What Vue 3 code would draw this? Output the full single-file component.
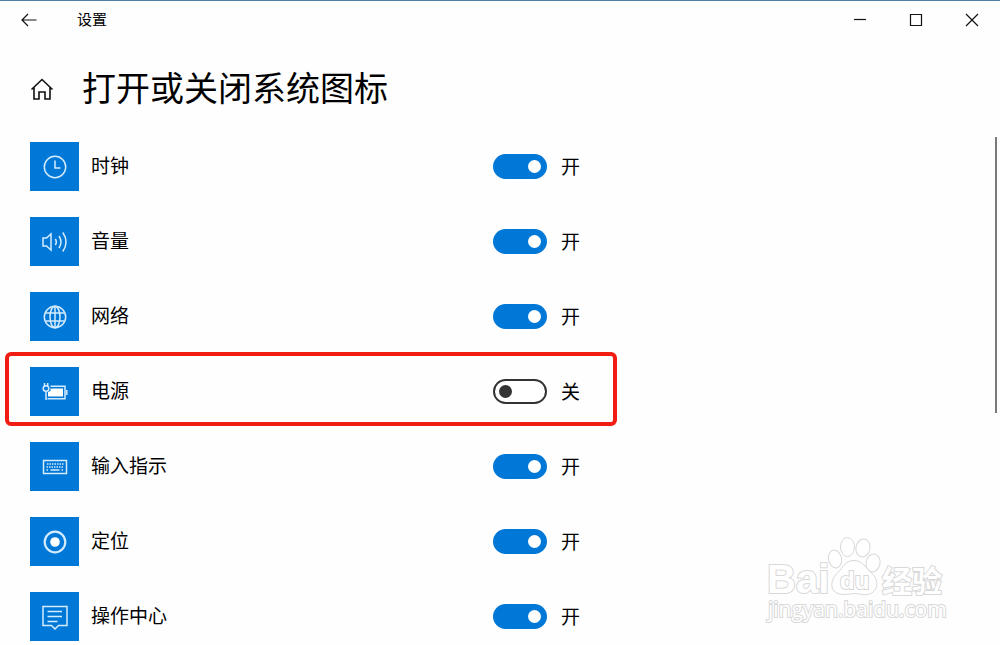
<script setup>
import { reactive } from 'vue'

const items = reactive([
  { id: 'clock', name: '时钟', on: true },
  { id: 'volume', name: '音量', on: true },
  { id: 'network', name: '网络', on: true },
  { id: 'power', name: '电源', on: false, marked: true },
  { id: 'input', name: '输入指示', on: true },
  { id: 'location', name: '定位', on: true },
  { id: 'action', name: '操作中心', on: true }
])
</script>

<template>
  <div class="window">
    <header class="titlebar">
      <button class="back" type="button" aria-label="返回">
        <svg width="16" height="14" viewBox="0 0 16 14"><path d="M15.500 7H1M7 1L1 7l6 6" /></svg>
      </button>
      <span class="app-name">设置</span>
      <div class="controls">
        <button type="button" aria-label="最小化">
          <svg width="14" height="14" viewBox="0 0 14 14"><path d="M1 6.500h12" /></svg>
        </button>
        <button type="button" aria-label="最大化">
          <svg width="14" height="14" viewBox="0 0 14 14"><path d="M1.500 1.500h11v11h-11z" /></svg>
        </button>
        <button type="button" aria-label="关闭">
          <svg width="14" height="14" viewBox="0 0 14 14"><path d="M1 1l12 12M13 1l-12 12" /></svg>
        </button>
      </div>
    </header>

    <div class="heading">
      <button class="home" type="button" aria-label="主页">
        <svg width="24" height="24" viewBox="0 0 24 24">
          <path d="M1.500 12.500L12 2.500l10.500 10M4 10.500v11.500h5v-7h6v7h5V10.500" />
        </svg>
      </button>
      <h1>打开或关闭系统图标</h1>
    </div>

    <div class="body">
      <main class="list">
        <div v-for="item in items" :key="item.id" class="row" :class="{ marked: item.marked }">
          <span class="tile">
            <svg width="26" height="26" viewBox="0 0 26 26" aria-hidden="true">
              <g v-if="item.id === 'clock'">
                <circle cx="13" cy="13" r="10.700" />
                <path d="M13 6.500V14h5.500" />
              </g>
              <g v-else-if="item.id === 'volume'">
                <path d="M1 9h3.500l4.500-4v16l-4.500-4H1z" />
                <path d="M13.300 10q2 3 0 6M17 7q4 6 0 12M20.800 3.500q6.500 9.500 0 19" />
              </g>
              <g v-else-if="item.id === 'network'">
                <circle cx="13" cy="13" r="10.700" />
                <ellipse cx="13" cy="13" rx="5" ry="10.700" />
                <path d="M13 2.300v21.400M3.500 9h19M3.500 17h19" />
              </g>
              <g v-else-if="item.id === 'power'">
                <path d="M2.500 4v4M5.700 4v4M4 12v9" />
                <circle cx="4" cy="9.500" r="2.800" />
                <path class="solid" d="M8.500 9.500h12.500v8H6v-4.500l2.500-1z" />
                <path d="M8.500 7.200H23v12.600H5.500M24.800 11v5" />
              </g>
              <g v-else-if="item.id === 'input'">
                <path d="M1.500 6.500h23v13h-23z" />
                <path class="keys" d="M5 10h16.500M4.500 13h17" />
                <path class="keys" d="M4.500 16h2M19.500 16h2" />
                <path d="M8.500 16h9" />
              </g>
              <g v-else-if="item.id === 'location'">
                <circle class="ring" cx="13" cy="13" r="10.300" />
                <circle class="solid" cx="13" cy="13" r="4.800" />
              </g>
              <g v-else>
                <path d="M1 2.500h24v19h-8.500L13 25l-3.500-3.500H1z" />
                <path d="M5.500 7.500h14.500M5.500 12.500h14.500M5.500 17.500h10" />
              </g>
            </svg>
          </span>
          <label class="name" :for="item.id">{{ item.name }}</label>
          <input :id="item.id" v-model="item.on" class="toggle" type="checkbox" role="switch" />
          <span class="state">{{ item.on ? '开' : '关' }}</span>
        </div>
      </main>
      <div class="scrollbar" aria-hidden="true"></div>
    </div>

    <svg class="brand" width="184" height="92" viewBox="0 0 184 92" role="img" aria-label="Baidu 经验">
      <ellipse cx="71" cy="23" rx="6.500" ry="9" transform="rotate(-12 71 23)" />
      <ellipse cx="83.500" cy="11" rx="7" ry="9.500" />
      <ellipse cx="99" cy="12" rx="7" ry="9" transform="rotate(12 99 12)" />
      <ellipse cx="109" cy="27" rx="7" ry="9" transform="rotate(12 109 27)" />
      <path d="M90 24.500c-9 0-11 7-16 12-9 8-9 22 6 22 6 0 10-2 18 0 16 2 19-14 9-22-6-5-8-12-17-12z" />
      <text class="latin" x="3" y="57">Bai</text>
      <text class="du" x="76" y="53">du</text>
      <text class="cjk" x="118" y="56">经验</text>
      <text class="url" x="4" y="81">jingyan.baidu.com</text>
    </svg>
  </div>
</template>

<style>
body {
  background: #fefefe;
}
</style>

<style scoped>
.window {
  position: relative;
  min-height: 100vh;
  box-sizing: border-box;
  overflow: hidden;
  border-top: 1px solid #4b80a0;
  color: #000;
  font-family: "Liberation Sans", "Noto Sans CJK SC", sans-serif;
}

button {
  display: flex;
  align-items: center;
  justify-content: center;
  padding: 0;
  border: 0;
  background: none;
}

svg {
  display: block;
  fill: none;
  stroke: #111;
  stroke-width: 1.200;
}

.titlebar {
  display: flex;
  align-items: center;
  height: 38px;
}

.back {
  width: 58px;
  height: 38px;
}

.app-name {
  margin-left: 19px;
  font-size: 15px;
  line-height: 38px;
}

.controls {
  display: flex;
  margin-left: auto;
}

.controls button {
  width: 56px;
  height: 38px;
}

.heading {
  display: flex;
  align-items: center;
  height: 100px;
  padding-left: 30px;
}

.home svg {
  stroke-width: 1.600;
}

h1 {
  margin: 0 0 0 28px;
  font-size: 34px;
  font-weight: 400;
  line-height: 50px;
}

.body {
  display: flex;
  justify-content: space-between;
  padding-top: 3px;
}

.list {
  display: grid;
  flex: 1;
  gap: 26px;
  padding-left: 30px;
}

.row {
  position: relative;
  display: grid;
  grid-template-columns: 49px 390px 54px auto;
  align-items: center;
  column-gap: 12px;
  width: 587px;
  height: 49px;
  box-sizing: border-box;
}

.row.marked::after {
  content: "";
  position: absolute;
  inset: -15px 0 -10px -25px;
  border: 4px solid #f21d12;
  border-radius: 6px;
  pointer-events: none;
}

.tile {
  display: flex;
  align-items: center;
  justify-content: center;
  height: 49px;
  background: #0078d7;
}

.tile svg {
  stroke: #d5ecff;
  stroke-width: 1.500;
}

.tile .solid {
  fill: #fff;
  stroke: none;
}

.tile .ring {
  stroke-width: 2.200;
}

.tile .keys {
  stroke-dasharray: 1.500 1;
}

.name,
.state {
  font-size: 19px;
  line-height: 28px;
}

.state {
  padding: 2px 0 0 2px;
}

.toggle {
  appearance: none;
  display: flex;
  align-items: center;
  justify-content: flex-end;
  width: 54px;
  height: 25px;
  margin: 0;
  padding: 0 4px;
  box-sizing: border-box;
  border: 2px solid #0078d7;
  border-radius: 13px;
  background: #0078d7;
}

.toggle::before {
  content: "";
  width: 13px;
  height: 13px;
  border-radius: 50%;
  background: #fff;
}

.toggle:not(:checked) {
  justify-content: flex-start;
  border-color: #333;
  background: #fff;
}

.toggle:not(:checked)::before {
  background: #333;
}

.scrollbar {
  width: 2px;
  height: 276px;
  margin: -5px 3px 0 0;
  background: #7a7a7a;
}

.brand {
  position: absolute;
  right: 52px;
  bottom: 17px;
  fill: #fff;
  stroke: #d8d8d8;
  stroke-width: 1;
  pointer-events: none;
}

.brand text {
  paint-order: stroke;
  stroke-width: 2;
}

.latin,
.du {
  font-family: "Liberation Sans", sans-serif;
  font-weight: 700;
}

.latin {
  font-size: 40px;
}

.du {
  font-size: 24px;
}

.cjk {
  font-family: "Noto Sans CJK SC", sans-serif;
  font-size: 30px;
  font-weight: 700;
}

.url {
  font-family: "Open Sans", sans-serif;
  font-size: 21px;
}
</style>
